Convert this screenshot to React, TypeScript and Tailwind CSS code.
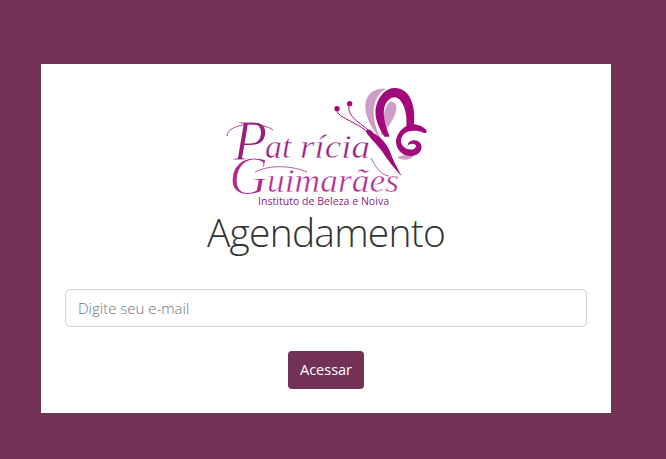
export default function App() {
  return (
    <div className="h-screen w-full bg-[#713256] pt-[64px] pl-[41px] overflow-hidden" style={{ fontFamily: '"Open Sans", sans-serif' }}>
      <div className="w-[570px] bg-white px-6 pt-[11px] pb-6 flex flex-col items-center">
        <svg className="block w-[230px] h-[133px] shrink-0" viewBox="210 75 230 133" fill="none">
          <g transform="translate(330 80) scale(0.3333)">
            <path d="M105 62C112 38 135 22 165 27C146 36 130 58 128 90C127 120 135 150 150 175C122 150 96 100 105 62Z" fill="#cf9cc5" />
            <path d="M176 66C188 62 198 72 196 88C192 115 170 145 150 168C152 130 158 82 176 66Z" fill="#cf9cc5" />
            <path d="M198 232C215 224 235 222 252 224C240 240 215 244 198 232Z" fill="#cf9cc5" />
            <path d="M160 170C146 148 126 112 136 76C145 44 168 22 195 24C226 26 245 55 249 95C250 110 250 120 249 133C264 134 280 142 287 152C288 159 283 161 277 158C260 151 236 150 222 160C209 170 207 184 214 196C222 208 240 212 250 206C257 201 256 194 248 192C240 190 234 192 230 198C230 184 246 177 260 183C274 190 276 208 263 220C248 232 222 230 208 216C196 203 192 184 198 170C202 158 212 146 226 138C228 118 226 80 205 58C190 44 172 54 162 76C153 100 162 135 176 170Z" fill="#a3087d" />
            <path d="M106 150C112 146 122 150 128 160C150 170 168 195 176 212C186 240 198 262 212 288C192 268 170 240 152 212C136 192 116 172 106 158Z" fill="#a3087d" />
            <circle cx="18" cy="86" r="8" fill="#a3087d" />
            <circle cx="56" cy="71" r="8" fill="#a3087d" />
            <path d="M18 86C14 112 62 118 108 154" stroke="#a3087d" strokeWidth="3" />
            <path d="M54 73C48 108 78 122 112 150" stroke="#a3087d" strokeWidth="3" />
          </g>
          <text x="232" y="160" fill="#96217f" stroke="#ffffff" strokeWidth="1.1" fontStyle="italic" fontFamily="Liberation Serif" fontSize="56">P</text>
          <text y="158" fill="#96217f" stroke="#ffffff" strokeWidth="0.5" fontStyle="italic" fontFamily="Liberation Serif">
            <tspan x="264" fontSize="34">at</tspan>
            <tspan x="299" fontSize="33" textLength="70" lengthAdjust="spacingAndGlyphs">rícia</tspan>
          </text>
          <text x="228" y="194" fill="#b02a92" stroke="#ffffff" strokeWidth="1.2" fontStyle="italic" fontFamily="Liberation Serif" fontSize="54">G</text>
          <text x="266" y="192" fill="#b02a92" stroke="#ffffff" strokeWidth="0.5" fontStyle="italic" fontFamily="Liberation Serif" fontSize="33" textLength="132" lengthAdjust="spacingAndGlyphs">uimarães</text>
          <path d="M226 136C226 124 258 120 272 130" stroke="#96217f" strokeWidth="0.8" />
          <path d="M254 172C270 164 292 166 306 172" stroke="#b02a92" strokeWidth="0.8" />
          <path d="M370 158C375 168 380 175 388 176" stroke="#96217f" strokeWidth="0.7" />
          <text x="257" y="205" fill="#8f2179" fontSize="10.5" fontFamily="Open Sans" fontWeight="400" textLength="131" lengthAdjust="spacing">Instituto de Beleza e Noiva</text>
        </svg>
        <h1 className="text-[39px] leading-[48px] font-light text-[#333333] tracking-[-0.8px]">Agendamento</h1>
        <input
          className="mt-[33px] h-[38px] w-full rounded-[5px] border border-[#ced4da] bg-white px-3 text-[15px] font-light text-[#495057] placeholder:text-[#6c757d] outline-none"
          placeholder="Digite seu e-mail"
        />
        <button className="mt-6 h-[38px] w-[76px] rounded-[4px] bg-[#713256] text-[14.5px] font-normal text-white">Acessar</button>
      </div>
    </div>
  );
}
